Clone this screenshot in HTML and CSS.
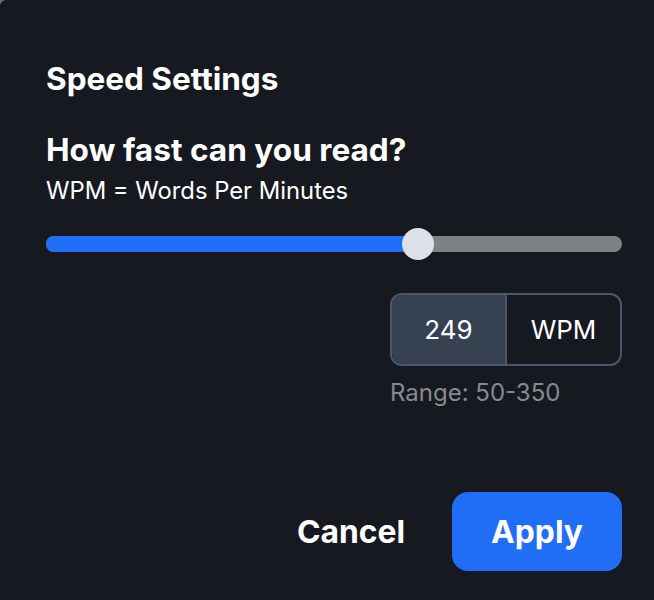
FILE: index.html
```html
<!DOCTYPE html>
<html lang="en">
<head>
  <meta charset="UTF-8" />
  <meta name="viewport" content="width=device-width, initial-scale=1.0" />
  <link rel="stylesheet" href="styles.css">
</head>
<body>

  <div class="speed-dialog">
    <h2 class="title">Speed Settings</h2>

    <h3 class="question">How fast can you read?</h3>
    <p class="hint">WPM = Words Per Minutes</p>

    <div class="slider">
      <div class="track">
        <div class="fill" style="width: 372px;"></div>
      </div>
      <div class="thumb" style="left: 356px;"></div>
    </div>

    <div class="wpm-row">
      <div class="wpm-box">
        <span class="wpm-value">249</span>
        <span class="wpm-unit">WPM</span>
      </div>
      <div class="range">Range: 50-350</div>
    </div>

    <div class="actions">
      <button class="btn btn-cancel">Cancel</button>
      <button class="btn btn-apply">Apply</button>
    </div>
  </div>

</body>
</html>
```

FILE: styles.css
```css
body {
  margin: 0;
  background: #6d7078;
  font-family: Inter, "Noto Sans", Arial, sans-serif;
  color: white;
}

.speed-dialog {
  display: flex;
  flex-direction: column;
  box-sizing: border-box;
  width: 654px;
  height: 600px;
  padding: 61px 32px 29px 46px;
  background: #161920;
  border-top-left-radius: 6px;
}

.title {
  margin: 0;
  font-size: 31.5px;
  line-height: 36px;
  font-weight: 700;
}

.question {
  margin: 33px 0 5px;
  font-size: 31.6px;
  line-height: 40px;
  font-weight: 700;
}

.hint {
  margin: 0;
  font-size: 23.8px;
  line-height: 32px;
  font-weight: 400;
}

.slider {
  position: relative;
  margin-top: 21px;
  height: 32px;
  display: flex;
  align-items: center;
}

.slider .track {
  flex: 1;
  height: 16px;
  border-radius: 8px;
  background: #7e8283;
  overflow: hidden;
}

.slider .fill {
  height: 100%;
  background: #1f6ef5;
}

.slider .thumb {
  position: absolute;
  top: 0;
  width: 32px;
  height: 32px;
  border-radius: 50%;
  background: #dde0e8;
}

.wpm-row {
  display: flex;
  flex-direction: column;
  align-items: flex-end;
  margin-top: 33px;
}

.wpm-box {
  display: flex;
  box-sizing: border-box;
  width: 232px;
  height: 73px;
  border: 2px solid #4a576d;
  border-radius: 12px;
  overflow: hidden;
  font-size: 26px;
}

.wpm-value,
.wpm-unit {
  display: flex;
  align-items: center;
  justify-content: center;
}

.wpm-value {
  width: 113px;
  background: #364152;
  border-right: 2px solid #4a576d;
}

.wpm-unit {
  flex: 1;
}

.range {
  align-self: flex-start;
  margin: 12px 0 0 344px;
  font-size: 24px;
  line-height: 30px;
  color: #878a90;
}

.actions {
  margin-top: auto;
  display: flex;
  justify-content: flex-end;
  gap: 8px;
}

.btn {
  height: 79px;
  padding: 0 39px;
  border: none;
  border-radius: 16px;
  font-family: inherit;
  font-size: 31.8px;
  font-weight: 700;
  color: white;
  cursor: pointer;
}

.btn-cancel {
  background: transparent;
}

.btn-apply {
  background: #1f6ef5;
}
```
